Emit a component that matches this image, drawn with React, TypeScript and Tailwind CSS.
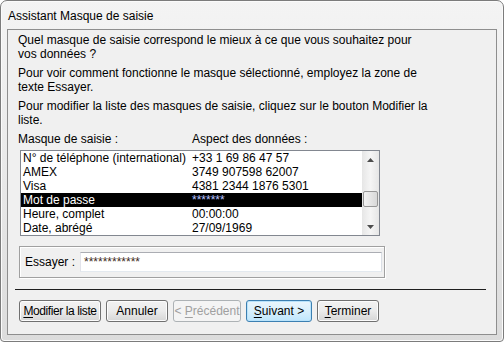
const rows = [
  { name: 'N° de téléphone (international)', value: '+33 1 69 86 47 57' },
  { name: 'AMEX', value: '3749 907598 62007' },
  { name: 'Visa', value: '4381 2344 1876 5301' },
  { name: 'Mot de passe', value: '*******', selected: true },
  { name: 'Heure, complet', value: '00:00:00' },
  { name: 'Date, abrégé', value: '27/09/1969' },
];

const btn =
  'h-[22px] rounded-[3px] border border-[#707070] bg-gradient-to-b from-[#f2f2f2] via-[#ebebeb] to-[#d6d6d6] text-[12px] text-black shadow-[inset_0_0_0_1px_#fcfcfc] flex items-center justify-center whitespace-nowrap';

const ScrollBar = () => (
  <div className="w-[17px] h-full flex flex-col bg-gradient-to-r from-[#e6e6e6] via-[#f5f5f5] to-[#e6e6e6]">
    <div className="h-[17px] flex items-center justify-center">
      <svg width="7" height="4" viewBox="0 0 7 4">
        <path d="M3.5 0 L7 4 L0 4 Z" fill="#4d4d4d" />
      </svg>
    </div>
    <div className="h-[23px]" />
    <div className="h-[16px] mx-[1px] rounded-[2px] border border-[#979797] bg-gradient-to-r from-[#f3f3f3] to-[#d8d8d8]" />
    <div className="flex-1" />
    <div className="h-[17px] flex items-center justify-center">
      <svg width="7" height="4" viewBox="0 0 7 4">
        <path d="M0 0 L7 0 L3.5 4 Z" fill="#4d4d4d" />
      </svg>
    </div>
  </div>
);

export default function App() {
  return (
    <div
      className="w-[504px] h-[342px] bg-white"
      style={{ fontFamily: '"Liberation Sans", Arial, sans-serif' }}
    >
      <div className="w-full h-full rounded-t-[7px] rounded-b-[4px] border border-[#7c7c7c] bg-gradient-to-b from-[#f4f4f4] via-[#e9e9e9] to-[#dcdcdc] flex flex-col px-[6px] pb-[6px] shadow-[inset_0_0_0_1px_#fbfbfb]">
        <div className="h-[28px] flex items-center pl-[1px] pt-[1px] text-[12px] text-black">
          Assistant Masque de saisie
        </div>
        <div className="flex-1 border border-[#8e8e8e] bg-[#f0f0f0] flex flex-col pt-[3px] text-[12px] leading-[14px] text-black">
          <div className="pl-[10px] flex flex-col gap-[5px]">
            <p>
              Quel masque de saisie correspond le mieux à ce que vous souhaitez pour
              <br />
              vos données ?
            </p>
            <p>
              Pour voir comment fonctionne le masque sélectionné, employez la zone de
              <br />
              texte Essayer.
            </p>
            <p>
              Pour modifier la liste des masques de saisie, cliquez sur le bouton Modifier la
              <br />
              liste.
            </p>
          </div>
          <div className="pl-[10px] mt-[5px] flex">
            <span className="w-[174px]">Masque de saisie :</span>
            <span>Aspect des données :</span>
          </div>
          <div className="ml-[12px] mt-[4px] w-[360px] h-[86px] border border-[#828790] bg-white flex">
            <div className="flex-1 flex flex-col">
              {rows.map((r) => (
                <div
                  key={r.name}
                  className={`h-[14px] flex leading-[14px] ${r.selected ? 'bg-black text-white' : ''}`}
                >
                  <span className="w-[171px] pl-[2px] whitespace-nowrap">{r.name}</span>
                  <span className={`whitespace-nowrap ${r.selected ? 'text-[#b8c4ff]' : ''}`}>
                    {r.value}
                  </span>
                </div>
              ))}
            </div>
            <ScrollBar />
          </div>
          <div className="ml-[11px] mt-[10px] w-[366px] h-[32px] border border-[#a0a0a0] shadow-[inset_1px_1px_0_#ffffff,1px_1px_0_#ffffff] flex items-center pl-[5px]">
            <span className="w-[55px]">Essayer :</span>
            <div className="w-[302px] h-[20px] border border-[#abadb3] border-l-[#e2e3ea] border-r-[#dbdfe6] border-b-[#e3e9ef] bg-white pl-[3px] leading-[18px] text-[#402a1a]">
              ************
            </div>
          </div>
          <div className="ml-[7px] mt-[11px] w-[471px] h-[1px] bg-[#1e1e1e]" />
          <div className="ml-[11px] mt-[10px] flex gap-[5px]">
            <button className={`${btn} w-[82px] tracking-[-0.4px]`}>
              <span>
                <span className="underline underline-offset-2">M</span>odifier la liste
              </span>
            </button>
            <button className={`${btn} w-[62px]`}>
              <span>Annuler</span>
            </button>
            <button className="h-[22px] w-[68px] rounded-[3px] border border-[#adb2b5] bg-[#f4f4f4] text-[12px] text-[#a0a0a0] flex items-center justify-center whitespace-nowrap">
              <span>
                &lt; <span className="underline underline-offset-2">P</span>récédent
              </span>
            </button>
            <button className="h-[22px] w-[66px] rounded-[3px] border border-[#3c7fb1] bg-gradient-to-b from-[#eaf6fd] via-[#d9f0fc] to-[#bee6fd] text-[12px] text-black shadow-[inset_0_0_0_1px_#b9e3fb] flex items-center justify-center whitespace-nowrap">
              <span>
                <span className="underline underline-offset-2">S</span>uivant &gt;
              </span>
            </button>
            <button className={`${btn} w-[62px]`}>
              <span>
                <span className="underline underline-offset-2">T</span>erminer
              </span>
            </button>
          </div>
        </div>
      </div>
    </div>
  );
}
